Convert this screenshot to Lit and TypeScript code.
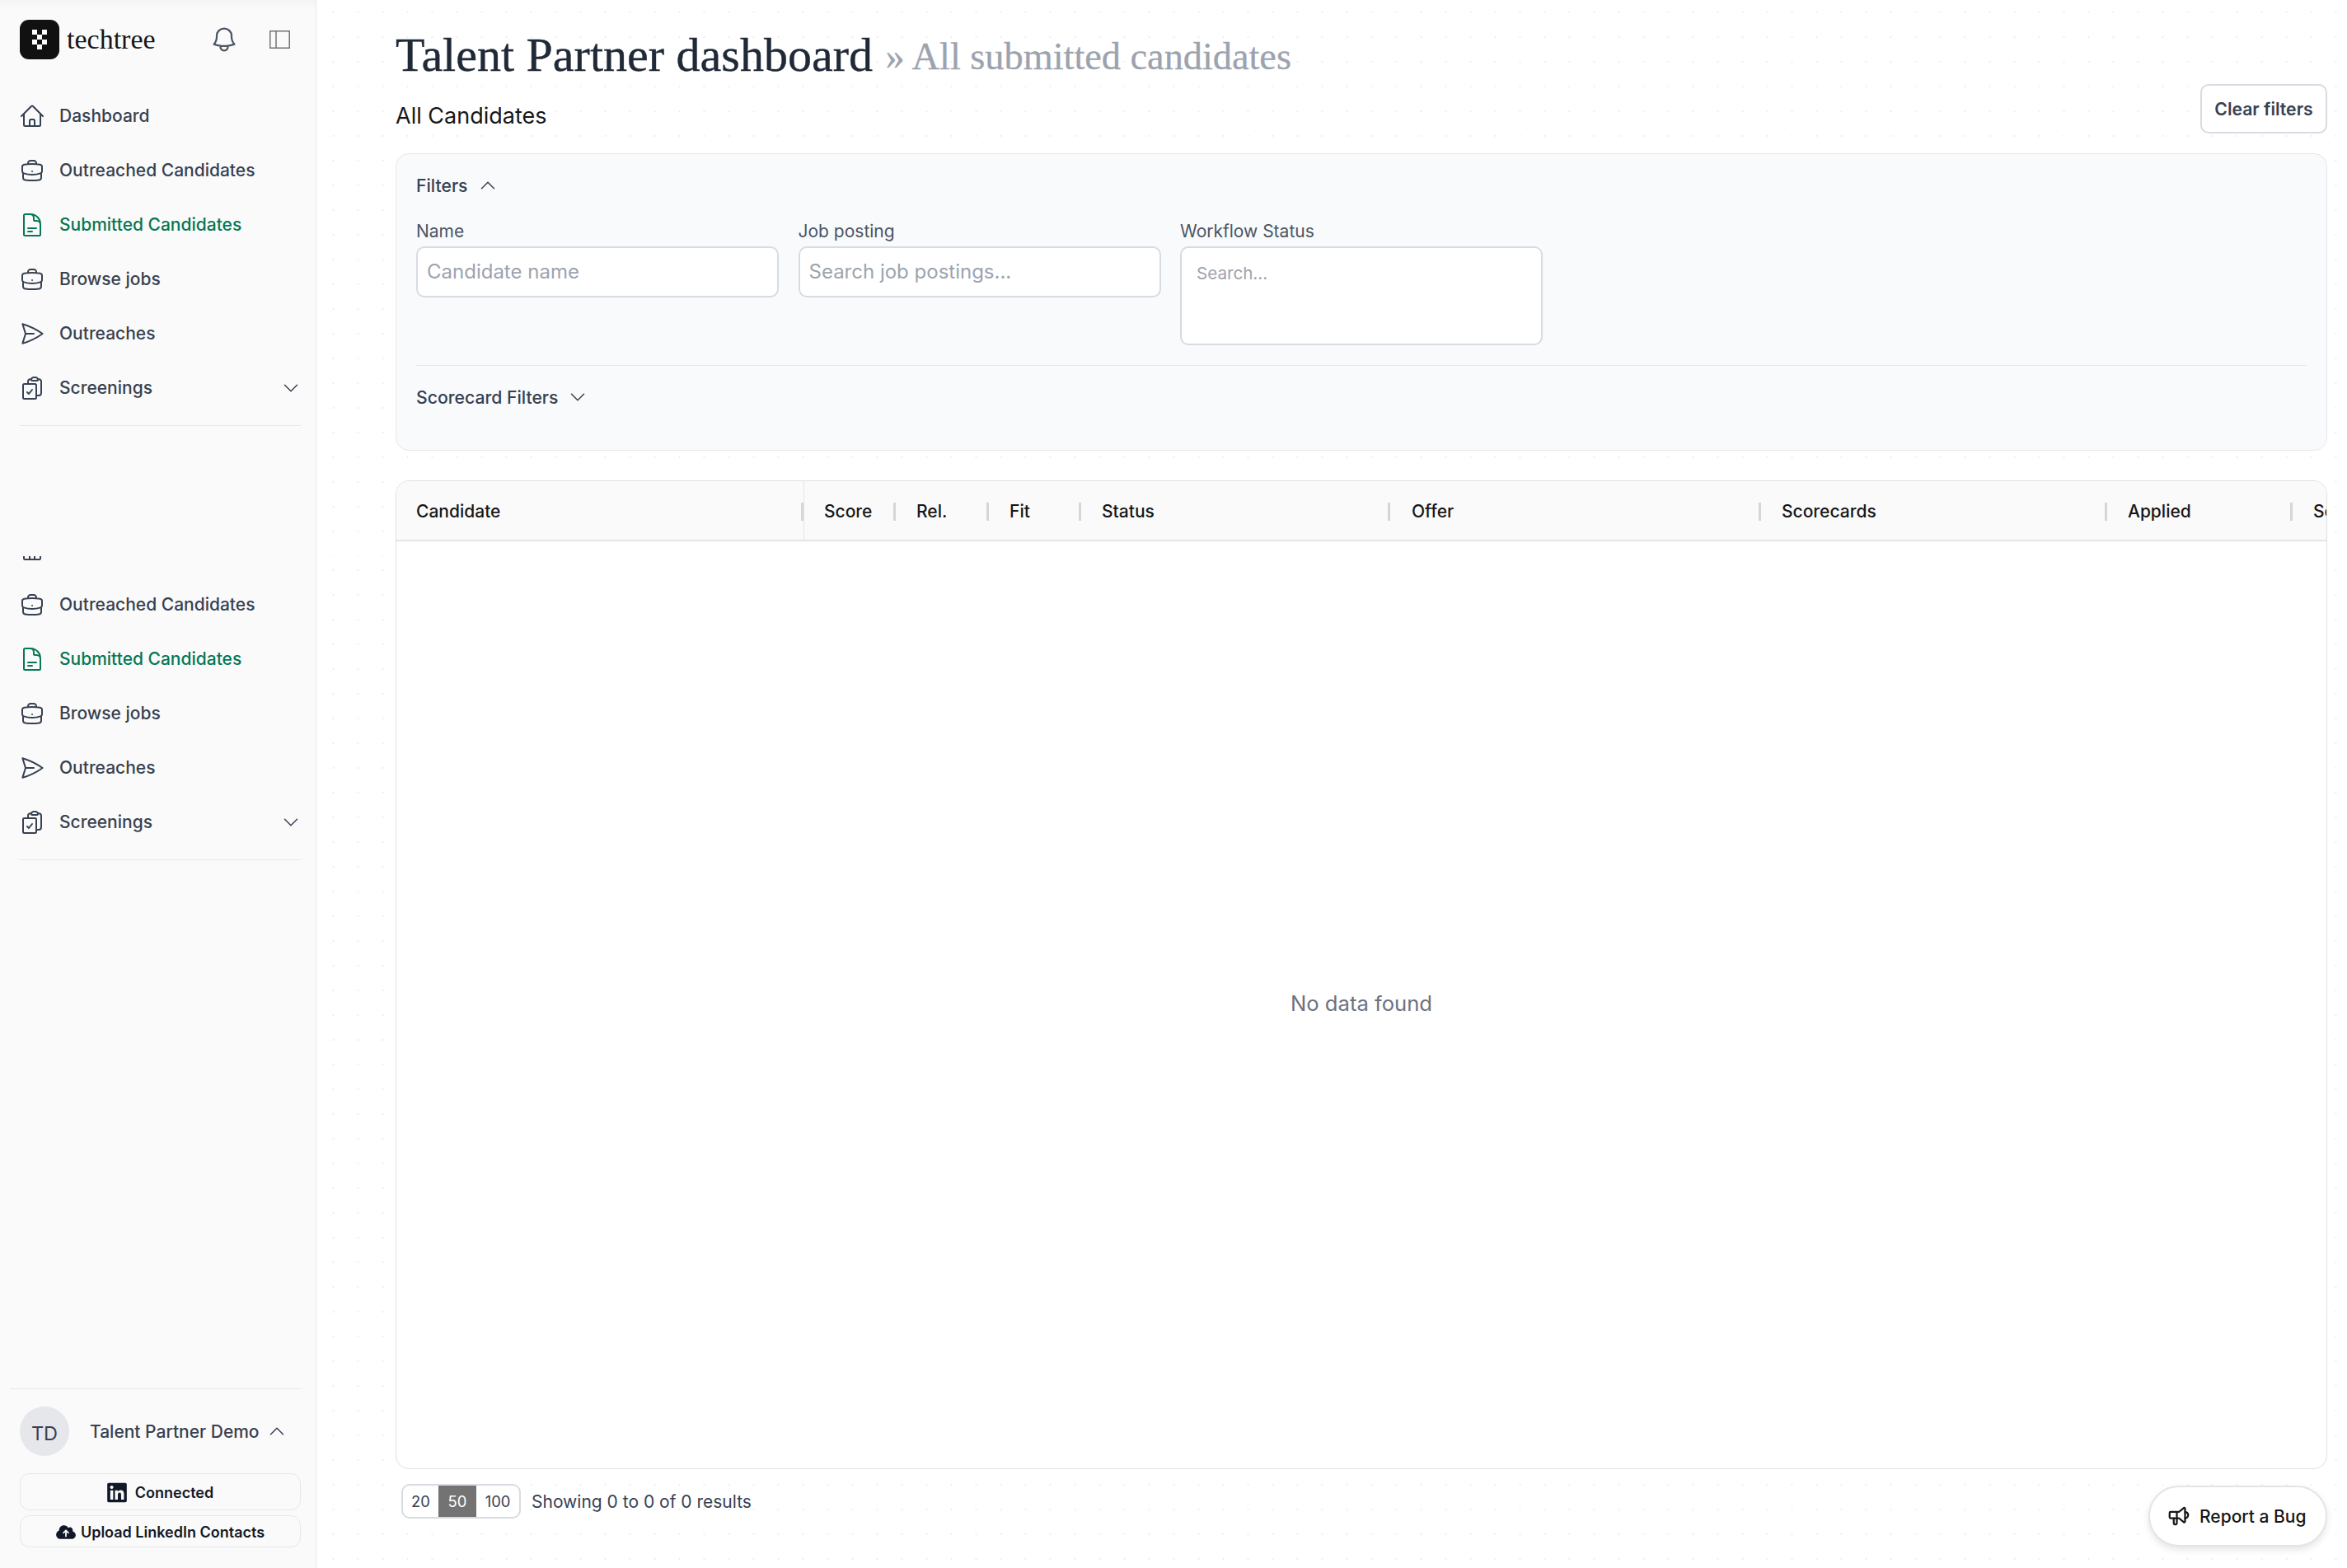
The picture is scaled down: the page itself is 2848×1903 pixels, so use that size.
import { LitElement, html, css, svg } from "lit";
import { customElement } from "lit/decorators.js";

const P: Record<string, string> = {
  home: "M2.25 12l8.954-8.955c.44-.439 1.152-.439 1.591 0L21.75 12M4.5 9.75v10.125c0 .621.504 1.125 1.125 1.125H9.75v-4.875c0-.621.504-1.125 1.125-1.125h2.25c.621 0 1.125.504 1.125 1.125V21h4.125c.621 0 1.125-.504 1.125-1.125V9.75M8.25 21h8.25",
  brief: "M20.25 14.15v4.25c0 1.094-.787 2.036-1.872 2.18-2.087.277-4.216.42-6.378.42s-4.291-.143-6.378-.42c-1.085-.144-1.872-1.086-1.872-2.18v-4.25m16.5 0a2.18 2.18 0 00.75-1.661V8.706c0-1.081-.768-2.015-1.837-2.175a48.114 48.114 0 00-3.413-.387m4.5 8.006c-.194.165-.42.295-.673.38A23.978 23.978 0 0112 15.75c-2.648 0-5.195-.429-7.577-1.22a2.016 2.016 0 01-.673-.38m0 0A2.18 2.18 0 013 12.489V8.706c0-1.081.768-2.015 1.837-2.175a48.111 48.111 0 013.413-.387m7.5 0V5.25A2.25 2.25 0 0013.5 3h-3a2.25 2.25 0 00-2.25 2.25v.894m7.5 0a48.667 48.667 0 00-7.5 0M12 12.75h.008v.008H12v-.008z",
  doc: "M19.5 14.25v-2.625a3.375 3.375 0 00-3.375-3.375h-1.5A1.125 1.125 0 0113.5 7.125v-1.5a3.375 3.375 0 00-3.375-3.375H8.25m0 12.75h7.5m-7.5 3H12M10.5 2.25H5.625c-.621 0-1.125.504-1.125 1.125v17.25c0 .621.504 1.125 1.125 1.125h12.75c.621 0 1.125-.504 1.125-1.125V11.25a9 9 0 00-9-9z",
  plane: "M6 12L3.269 3.126A59.768 59.768 0 0121.485 12 59.77 59.77 0 013.27 20.876L5.999 12zm0 0h7.5",
  clip: "M11.35 3.836c-.065.21-.1.433-.1.664 0 .414.336.75.75.75h4.5a.75.75 0 00.75-.75 2.25 2.25 0 00-.1-.664m-5.8 0A2.251 2.251 0 0113.5 2.25H15c1.012 0 1.867.668 2.15 1.586m-5.8 0c-.376.023-.75.05-1.124.08C9.095 4.01 8.25 4.973 8.25 6.108V8.25m8.9-4.414c.376.023.75.05 1.124.08 1.131.094 1.976 1.057 1.976 2.192V16.5A2.25 2.25 0 0118 18.75h-2.25m-7.5-10.5H4.875c-.621 0-1.125.504-1.125 1.125v11.25c0 .621.504 1.125 1.125 1.125h9.75c.621 0 1.125-.504 1.125-1.125V18.75m-7.5-10.5h6.375c.621 0 1.125.504 1.125 1.125v9.375m-8.25-3l1.5 1.5 3-3.75",
  bell: "M14.857 17.082a23.848 23.848 0 005.454-1.31A8.967 8.967 0 0118 9.75v-.7V9A6 6 0 006 9v.75a8.967 8.967 0 01-2.312 6.022c1.733.64 3.56 1.085 5.455 1.31m5.714 0a24.255 24.255 0 01-5.714 0m5.714 0a3 3 0 11-5.714 0",
  down: "M19.5 8.25l-7.5 7.5-7.5-7.5",
  up: "M4.5 15.75l7.5-7.5 7.5 7.5",
};

const icon = (n: string, cls = "ic") => html`<svg class=${cls} viewBox="0 0 24 24" fill="none" stroke="currentColor" stroke-width="1.5" stroke-linecap="round" stroke-linejoin="round"><path d=${P[n]}></path></svg>`;

const group = [
  ["brief", "Outreached Candidates"],
  ["doc", "Submitted Candidates", "on"],
  ["brief", "Browse jobs"],
  ["plane", "Outreaches"],
];

const columns = [
  ["Candidate", "c0"], ["Score", "c1"], ["Rel.", "c2"], ["Fit", "c3"], ["Status", "c4"],
  ["Offer", "c5"], ["Scorecards", "c6"], ["Applied", "c7"], ["Screening", "c8"],
];

@customElement("app-root")
export class AppRoot extends LitElement {
  static styles = css`
    :host { display: block; width: 2848px; height: 1903px; overflow: hidden; font-family: Inter, "Liberation Sans", sans-serif; color: #374151; background: #fff; }
    * { box-sizing: border-box; }
    .shell { display: flex; width: 2848px; height: 1903px; }
    .side { width: 384px; flex: none; height: 1903px; background: #fafafa; border-right: 1px solid #e8e8e8; display: flex; flex-direction: column; padding-right: 18px; background-image: linear-gradient(#f4f4f4, #fafafa 10px); }
    .top { height: 107px; flex: none; display: flex; align-items: flex-start; padding: 24px 0 0 24px; }
    .logo { width: 48px; height: 48px; display: block; flex: none; }
    .brand { font-family: "Liberation Serif", serif; font-size: 34px; line-height: 48px; color: #171717; margin-left: 9px; width: 164px; flex: none; }
    .bell { width: 36px; height: 36px; margin: 6px 0 0 9px; color: #4b5563; flex: none; }
    .pane { width: 25px; height: 22px; margin: 13px 0 0 37px; flex: none; color: #737373; }
    .item { height: 66px; flex: none; display: flex; align-items: center; padding: 1px 0 0 23px; font-size: 21px; font-weight: 500; color: #374151; white-space: nowrap; }
    .item.on { color: #047857; }
    .ic { width: 32px; height: 32px; flex: none; margin-right: 17px; }
    .chev { width: 24px; height: 24px; margin-left: auto; margin-right: 0; color: #374151; flex: none; }
    .rule { height: 1px; flex: none; background: #e5e7eb; margin: 13px 0 0 24px; }
    .gap { height: 158px; flex: none; }
    .sliver { height: 5px; flex: none; overflow: hidden; margin-left: 23px; color: #374151; margin-bottom: 20px; }
    .sliver svg { display: block; width: 32px; height: 32px; margin-top: -24px; }
    .foot { margin: auto 0 0 12px; border-top: 1px solid #e5e7eb; padding: 21px 0 25px 12px; display: flex; flex-direction: column; }
    .user { display: flex; align-items: center; height: 60px; }
    .avatar { width: 60px; height: 60px; border-radius: 50%; background: #e5e7eb; display: flex; align-items: center; justify-content: center; font-size: 23.5px; color: #374151; flex: none; padding-top: 4px; }
    .uname { margin-left: 25px; font-size: 21px; font-weight: 500; color: #374151; white-space: nowrap; }
    .ucv { width: 24px; height: 24px; margin-left: 9px; color: #374151; }
    .btn { display: flex; align-items: center; justify-content: center; border: 1px solid #e5e7eb; border-radius: 12px; font-size: 18px; font-weight: 600; color: #111827; white-space: nowrap; }
    .b1 { height: 45px; margin-top: 21px; padding-top: 1px; }
    .b2 { height: 39px; margin-top: 6px; padding-top: 1px; }
    .b1 svg { width: 24px; height: 27px; margin-right: 10px; fill: #111827; }
    .b2 svg { width: 24px; height: 19px; margin-right: 6px; fill: #111827; }

    .main { flex: 1; min-width: 0; height: 1903px; position: relative; padding: 0 24px 0 96px; display: flex; flex-direction: column; }
    .dots { position: absolute; inset: 0; display: flex; flex-direction: column; pointer-events: none; }
    .d1, .d2 { background-image: radial-gradient(circle, #eeeeee 1px, transparent 1.3px); background-size: 30px 30px; }
    .d1 { height: 675px; flex: none; background-position: 5.5px 0; }
    .d2 { flex: 1; background-position: 5.5px 2px; }
    .layer { position: relative; display: flex; flex-direction: column; flex: 1; min-height: 0; }
    h1 { margin: 0; height: 102px; flex: none; font-family: "Liberation Serif", serif; font-weight: 400; font-size: 58px; line-height: 134px; color: #1f2937; white-space: nowrap; -webkit-text-stroke: .4px #1f2937; }
    h1 span { font-size: 46.3px; color: #9ca3af; margin-left: 1px; position: relative; top: -2px; -webkit-text-stroke: .3px #9ca3af; }
    .bar { display: flex; justify-content: space-between; height: 60px; flex: none; }
    .all { font-size: 27px; color: #171717; line-height: 77px; }
    .clear { width: 154px; height: 60px; border: 2px solid #d8dbe2; border-radius: 10px; background: #fff; display: flex; align-items: center; justify-content: center; font-size: 21.2px; font-weight: 600; color: #374151; }
    .card { margin-top: 24px; height: 361px; flex: none; background: #f9fafb; border: 1px solid #e5e7eb; border-radius: 16px; padding: 26px 24px 0; display: flex; flex-direction: column; }
    .fh { display: flex; align-items: center; height: 24px; font-size: 21.2px; font-weight: 500; color: #374151; flex: none; }
    .fh svg { width: 24px; height: 24px; margin-left: 12px; color: #374151; }
    .grid { display: grid; grid-template-columns: repeat(3, 440px); column-gap: 23.5px; margin-top: 31px; height: 153px; flex: none; align-items: start; }
    .lab { font-size: 21px; line-height: 26px; color: #4b5563; margin-bottom: 5px; white-space: nowrap; }
    input { display: block; width: 100%; height: 62px; border: 2px solid #d8dbe2; border-radius: 10px; background: #fff; padding: 0 11px 2px; font: 400 24px Inter, sans-serif; color: #374151; outline: none; }
    input::placeholder { color: #9ca3af; opacity: 1; }
    .multi { height: 120px; border: 2px solid #d8dbe2; border-radius: 10px; background: #fff; padding: 17px 18px; font-size: 20.6px; line-height: 28px; color: #9ca3af; }
    .sep { height: 1px; background: #e5e7eb; margin-top: 22px; flex: none; }
    .fh.sc { margin-top: 26px; }
    .tbl { margin-top: 36px; height: 1200px; flex: none; border: 1px solid #e0e0e0; border-radius: 16px; background: #fff; overflow: hidden; display: flex; flex-direction: column; }
    .thead { height: 73px; flex: none; display: flex; background: #fafafa; border-bottom: 2px solid #e5e5e5; }
    .th { flex: none; display: flex; align-items: center; padding-left: 25px; padding-top: 1px; font-size: 21px; font-weight: 500; color: #171717; position: relative; white-space: nowrap; }
    .th::after { content: ""; position: absolute; right: 0; top: 26px; height: 22px; width: 3px; background: #d6d6d6; }
    .c0 { width: 495px; padding-left: 24px; border-right: 1px solid #e5e5e5; }
    .c1 { width: 111px; padding-left: 24px; } .c2 { width: 113px; } .c3 { width: 112px; } .c4 { width: 375px; } .c5 { width: 450px; padding-left: 26px; } .c6 { width: 420px; } .c7 { width: 225px; }
    .c8 { width: 225px; } .c8::after { display: none; }
    .empty { flex: 1; display: flex; align-items: center; justify-content: center; font-size: 25.6px; color: #6b7280; padding-bottom: 5px; }
    .pager { display: flex; align-items: center; margin-top: 18px; height: 42px; flex: none; margin-left: 7px; }
    .seg { display: flex; width: 145px; height: 42px; border: 2px solid #d8dbe2; border-radius: 10px; overflow: hidden; background: #fff; font-size: 18.4px; color: #374151; flex: none; }
    .seg div { display: flex; align-items: center; justify-content: center; }
    .s1 { width: 43px; } .s2 { width: 46px; background: #737373; color: #fff; } .s3 { flex: 1; }
    .count { margin-left: 13px; font-size: 21px; color: #374151; white-space: nowrap; }
    .bug { position: absolute; right: 24px; top: 1803px; width: 217px; height: 74px; border-radius: 37px; background: #fff; border: 2px solid #e5e5e5; box-shadow: 0 4px 8px rgba(0,0,0,.1); display: flex; align-items: center; padding-left: 20px; font-size: 21px; font-weight: 500; color: #171717; white-space: nowrap; }
    .bug svg { width: 30px; height: 30px; margin-right: 10px; flex: none; }
  `;

  render() {
    return html`<div class="shell">
      <aside class="side">
        <div class="top">
          <svg class="logo" viewBox="0 0 48 48"><rect width="48" height="48" rx="11" fill="#111"></rect>
            ${[[15, 12], [27, 12], [21, 18], [15, 24], [27, 24], [21, 30]].map(([x, y]) => svg`<rect x=${x} y=${y} width="6" height="6" fill="#fff"></rect>`)}
          </svg>
          <div class="brand">techtree</div>
          ${icon("bell", "bell")}
          <svg class="pane" viewBox="0 0 25 22" fill="none" stroke="currentColor" stroke-width="1.5"><rect x=".75" y=".75" width="23.5" height="20.5"></rect><path d="M8 1v20"></path></svg>
        </div>
        <div class="item">${icon("home")}Dashboard</div>
        ${group.map(([i, t, c]) => html`<div class="item ${c || ""}">${icon(i)}${t}</div>`)}
        <div class="item">${icon("clip")}Screenings${icon("down", "chev")}</div>
        <div class="rule"></div>
        <div class="gap"></div>
        <div class="sliver">${icon("home", "")}</div>
        ${group.map(([i, t, c]) => html`<div class="item ${c || ""}">${icon(i)}${t}</div>`)}
        <div class="item">${icon("clip")}Screenings${icon("down", "chev")}</div>
        <div class="rule"></div>
        <div class="foot">
          <div class="user"><div class="avatar">TD</div><div class="uname">Talent Partner Demo</div>${icon("up", "ucv")}</div>
          <div class="btn b1"><svg viewBox="0 0 448 512"><path d="M416 32H31.9C14.3 32 0 46.5 0 64.3v383.4C0 465.5 14.3 480 31.9 480H416c17.6 0 32-14.5 32-32.3V64.3c0-17.8-14.4-32.3-32-32.3zM135.4 416H69V202.2h66.5V416zm-33.2-243c-21.3 0-38.5-17.3-38.5-38.5S80.9 96 102.2 96c21.2 0 38.5 17.3 38.5 38.5 0 21.3-17.2 38.5-38.5 38.5zm282.1 243h-66.4V312c0-24.8-.5-56.7-34.5-56.7-34.6 0-39.9 27-39.9 54.9V416h-66.4V202.2h63.7v29.2h.9c8.9-16.8 30.6-34.5 62.9-34.5 67.2 0 79.7 44.3 79.7 101.9V416z"></path></svg>Connected</div>
          <div class="btn b2"><svg viewBox="0 0 640 512"><path d="M144 480C64.5 480 0 415.5 0 336c0-62.8 40.2-116.2 96.2-135.9c-.1-2.7-.2-5.4-.2-8.1c0-88.4 71.6-160 160-160c59.3 0 111 32.2 138.7 80.2C409.9 102 428.3 96 448 96c53 0 96 43 96 96c0 12.2-2.3 23.8-6.4 34.6C596 238.4 640 290.1 640 352c0 70.7-57.3 128-128 128H144zm79-217c-9.4 9.4-9.4 24.6 0 33.9s24.6 9.4 33.9 0l39-39V392c0 13.3 10.7 24 24 24s24-10.7 24-24V257.9l39 39c9.4 9.4 24.6 9.4 33.9 0s9.4-24.6 0-33.9l-80-80c-9.4-9.4-24.6-9.4-33.9 0l-80 80z"></path></svg>Upload LinkedIn Contacts</div>
        </div>
      </aside>
      <main class="main">
        <div class="dots"><div class="d1"></div><div class="d2"></div></div>
        <div class="layer">
          <h1>Talent Partner dashboard <span>» All submitted candidates</span></h1>
          <div class="bar"><div class="all">All Candidates</div><div class="clear">Clear filters</div></div>
          <section class="card">
            <div class="fh">Filters${icon("up", "")}</div>
            <div class="grid">
              <div><div class="lab">Name</div><input placeholder="Candidate name" /></div>
              <div><div class="lab">Job posting</div><input placeholder="Search job postings..." /></div>
              <div><div class="lab">Workflow Status</div><div class="multi">Search...</div></div>
            </div>
            <div class="sep"></div>
            <div class="fh sc">Scorecard Filters${icon("down", "")}</div>
          </section>
          <section class="tbl">
            <div class="thead">${columns.map(([t, c]) => html`<div class="th ${c}">${t}</div>`)}</div>
            <div class="empty">No data found</div>
          </section>
          <div class="pager">
            <div class="seg"><div class="s1">20</div><div class="s2">50</div><div class="s3">100</div></div>
            <div class="count">Showing 0 to 0 of 0 results</div>
          </div>
        </div>
        <div class="bug"><svg viewBox="0 0 24 24" fill="none" stroke="currentColor" stroke-width="1.8" stroke-linecap="round" stroke-linejoin="round"><path d="M18 8a3 3 0 0 1 0 6"></path><path d="M10 8v11a1 1 0 0 1 -1 1h-1a1 1 0 0 1 -1 -1v-5"></path><path d="M12 8h0l4.524 -3.77a.9 .9 0 0 1 1.476 .692v12.156a.9 .9 0 0 1 -1.476 .692l-4.524 -3.77h-8a1 1 0 0 1 -1 -1v-4a1 1 0 0 1 1 -1h8"></path></svg>Report a Bug</div>
      </main>
    </div>`;
  }
}
